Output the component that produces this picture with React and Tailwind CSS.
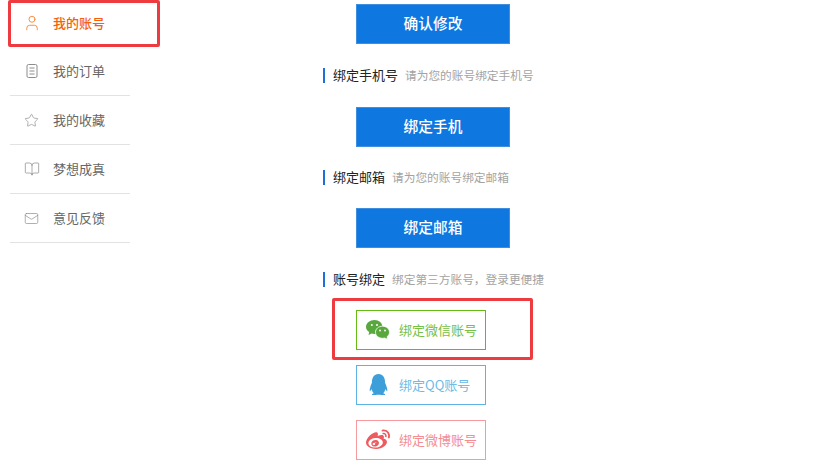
import React from "react";
import { User, Star, BookOpen, Mail } from "lucide-react";
import { FaQq, FaWeibo } from "react-icons/fa";

const font = { fontFamily: '"Noto Sans CJK SC", "Noto Sans", sans-serif' };

function Doc({ className }) {
  return (
    <svg width="16" height="16" viewBox="0 0 16 16" fill="none" stroke="currentColor" strokeWidth="1" className={className}>
      <rect x="3" y="1.5" width="10" height="13" rx="1.5" />
      <path d="M5.5 5h5M5.5 8h5M5.5 11h5" />
    </svg>
  );
}

function Wechat({ className }) {
  return (
    <svg width="24" height="20" viewBox="0 0 24 20" className={className}>
      <path fill="currentColor" d="M8.5 0C13 0 16.5 3 16.5 7S13 14 8.5 14c-1 0-2-.2-2.900-.5L2.500 15l.7-3C1.200 10.700 0 9 0 7 0 3 4 0 8.500 0z" />
      <circle cx="5.800" cy="5" r="1" fill="#fff" />
      <circle cx="11" cy="5" r="1" fill="#fff" />
      <path fill="currentColor" stroke="#fff" strokeWidth="0.8" d="M16.500 6.200c3.900 0 7 2.600 7 6 0 1.800-.9 3.400-2.400 4.500l.6 2.800-2.900-1.500c-.7.200-1.500.3-2.300.3-3.900 0-7-2.700-7-6.100s3.100-6 7-6z" />
      <circle cx="14" cy="10.500" r="0.900" fill="#fff" />
      <circle cx="19" cy="10.500" r="0.900" fill="#fff" />
    </svg>
  );
}

const nav = [
  { t: "我的账号", icon: <User size={18} strokeWidth={1.2} className="text-[#f5852f]" />, active: true },
  { t: "我的订单", icon: <Doc className="text-[#8c8c8c]" /> },
  { t: "我的收藏", icon: <Star size={15} strokeWidth={1.1} className="text-[#8c8c8c]" /> },
  { t: "梦想成真", icon: <BookOpen size={16} strokeWidth={1.1} className="text-[#8c8c8c]" /> },
  { t: "意见反馈", icon: <Mail size={15} strokeWidth={1.1} className="text-[#8c8c8c]" /> },
];

function Heading({ title, sub, className }) {
  return (
    <div className={"flex items-center h-[15px] pb-[2px] border-l-2 border-[#1f6fd8] pl-[8px] " + className}>
      <span className="text-[13px] text-[#222] mr-[7px]">{title}</span>
      <span className="text-[11.7px] text-[#a3a3a3]">{sub}</span>
    </div>
  );
}

function Primary({ children, className }) {
  return (
    <div className={"ml-[33px] w-[154px] h-[40px] pb-[1px] flex items-center justify-center bg-[#0f78e0] border border-[#3f8fe0] text-white font-medium text-[14.7px] " + className}>
      {children}
    </div>
  );
}

function Social({ icon, text, className, textClass }) {
  return (
    <div className={"ml-[33px] w-[130px] h-[40px] pb-[1px] flex items-center border bg-white text-[13px] " + className}>
      <span className="w-[42px] flex justify-center">{icon}</span>
      <span className={textClass}>{text}</span>
    </div>
  );
}

export default function App() {
  return (
    <div className="relative w-[837px] h-[473px] bg-white overflow-hidden flex" style={font}>
      <aside className="w-[120px] ml-[10px] shrink-0">
        {nav.map(({ t, icon, active }, i) => (
          <div
            key={t}
            className={
              "flex items-center border-b " +
              (i === 0 ? "h-[47px] border-transparent" : "h-[49px] border-[#e2e2e2]")
            }
          >
            <span className="w-[43px] flex justify-center">{icon}</span>
            <span className={"text-[13px] " + (active ? "text-[#f4600c] font-medium" : "text-[#666]")}>{t}</span>
          </div>
        ))}
      </aside>

      <main className="ml-[193px] pt-[4px] w-[300px]">
        <Primary>确认修改</Primary>
        <Heading className="mt-[24px]" title="绑定手机号" sub="请为您的账号绑定手机号" />
        <Primary className="mt-[24px]">绑定手机</Primary>
        <Heading className="mt-[23px]" title="绑定邮箱" sub="请为您的账号绑定邮箱" />
        <Primary className="mt-[23px]">绑定邮箱</Primary>
        <Heading className="mt-[24px]" title="账号绑定" sub="绑定第三方账号，登录更便捷" />
        <Social
          className="mt-[23px] border-[#63bb14]"
          textClass="text-[#76c043]"
          icon={<Wechat className="text-[#58a83e]" />}
          text="绑定微信账号"
        />
        <Social
          className="mt-[15px] border-[#5cb3e4]"
          textClass="text-[#6dbbe6]"
          icon={<FaQq size={21} className="text-[#3d9fd9]" />}
          text="绑定QQ账号"
        />
        <Social
          className="mt-[15px] border-[#f79a9f]"
          textClass="text-[#f58c90]"
          icon={<FaWeibo size={24} className="text-[#ee5a5e]" />}
          text="绑定微博账号"
        />
      </main>

      <div className="absolute left-[8px] top-0 w-[152px] h-[47px] border-[3px] border-[#ee3b40] rounded-[2px]" />
      <div className="absolute left-[332px] top-[298px] w-[201px] h-[62px] border-[3px] border-[#ee3b40] rounded-[2px]" />
    </div>
  );
}
